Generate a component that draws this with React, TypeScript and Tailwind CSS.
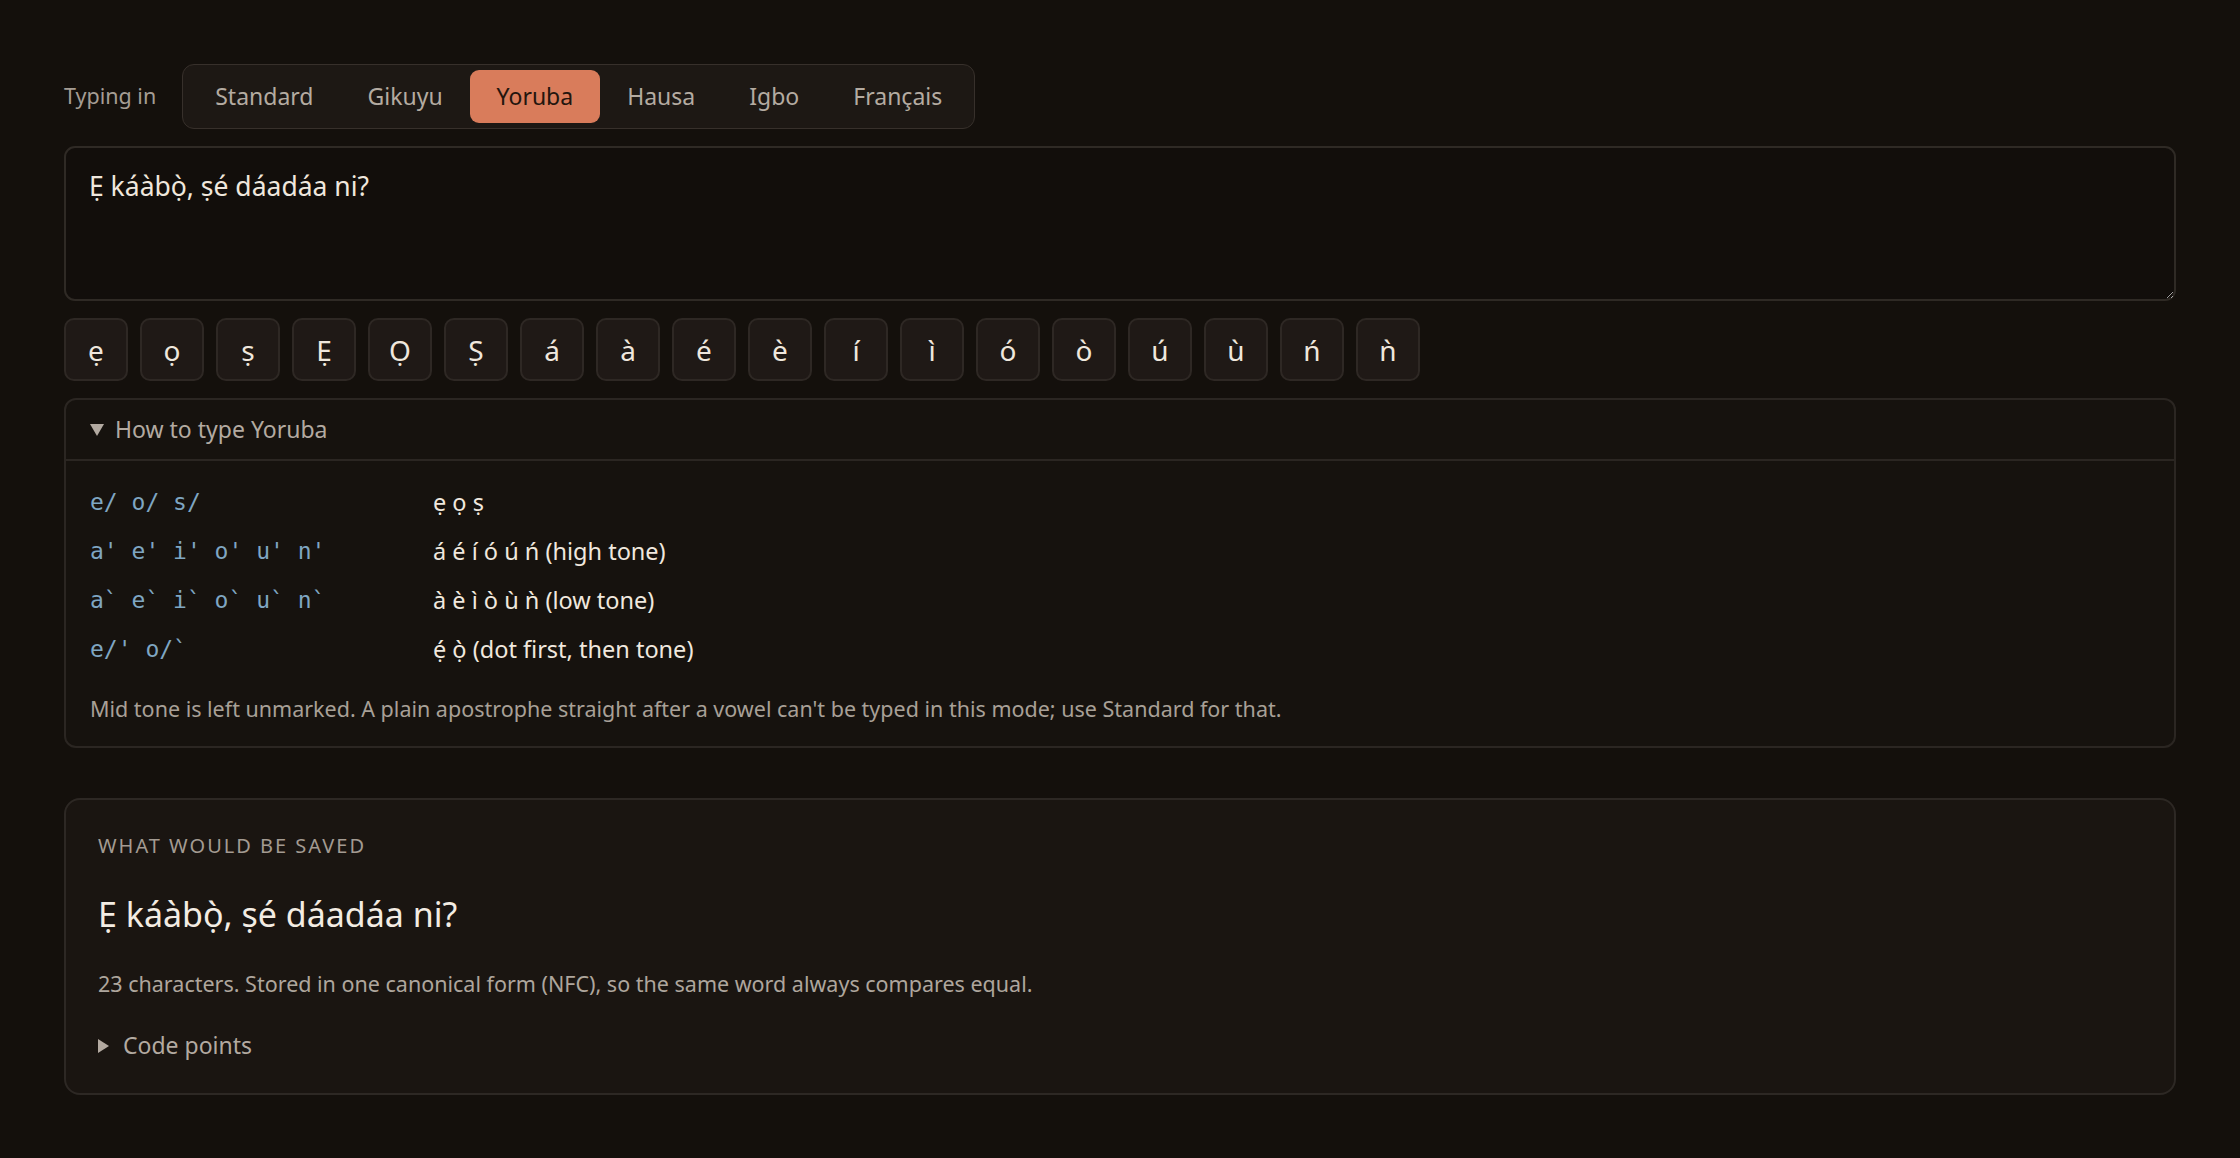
import React, { useState } from 'react'

const layouts = ['Standard', 'Gikuyu', 'Yoruba', 'Hausa', 'Igbo', 'Français']

const keys = ['ẹ', 'ọ', 'ṣ', 'Ẹ', 'Ọ', 'Ṣ', 'á', 'à', 'é', 'è', 'í', 'ì', 'ó', 'ò', 'ú', 'ù', 'ń', 'ǹ']

const hints: [string, string][] = [
  ['e/ o/ s/', 'ẹ ọ ṣ'],
  ["a' e' i' o' u' n'", 'á é í ó ú ń (high tone)'],
  ['a` e` i` o` u` n`', 'à è ì ò ù ǹ (low tone)'],
  ["e/' o/`", 'ẹ́ ọ̀ (dot first, then tone)'],
]

const DownTriangle = () => (
  <svg width="14" height="12" viewBox="0 0 14 12" className="shrink-0">
    <polygon points="0,0 14,0 7,12" fill="#b3aaa1" />
  </svg>
)

const RightTriangle = () => (
  <svg width="11" height="14" viewBox="0 0 11 14" className="shrink-0">
    <polygon points="0,0 11,7 0,14" fill="#b3aaa1" />
  </svg>
)

const App: React.FC = () => {
  const [layout, setLayout] = useState('Yoruba')
  const [text, setText] = useState('Ẹ káàbọ̀, ṣé dáadáa ni?')
  const saved = text.normalize('NFC')

  return (
    <div className="min-h-screen bg-[#14100c] font-['Noto_Sans',sans-serif] text-[#efe7dd] px-16 py-16">
      <div className="flex flex-col gap-[17px]">
        {/* layout picker */}
        <div className="flex items-center gap-[26px]">
          <span className="text-[21.5px] text-[#a59d94]">Typing in</span>
          <div className="flex rounded-[12px] border border-[#37302b] bg-[#1d1814] p-[5px]">
            {layouts.map((name) => (
              <button
                key={name}
                onClick={() => setLayout(name)}
                className={
                  name === layout
                    ? 'h-[53px] px-[27px] rounded-[9px] text-[23px] bg-[#d97c5b] text-[#23150e]'
                    : 'h-[53px] px-[27px] rounded-[9px] text-[23px] text-[#b4aba1]'
                }
              >
                {name}
              </button>
            ))}
          </div>
        </div>

        <textarea
          value={text}
          onChange={(e) => setText(e.target.value)}
          spellCheck={false}
          className="h-[155px] w-full rounded-[11px] border-2 border-[#2f2a25] bg-[#120e0b] px-[23px] py-[17px] text-[26.5px] leading-[42px] text-[#efe7dd] outline-none"
        />

        <div className="flex gap-[12px]">
          {keys.map((k) => (
            <button
              key={k}
              onClick={() => setText((prev) => prev + k)}
              className="flex h-[63px] w-[64px] items-center justify-center rounded-[10px] border-2 border-[#2e2824] bg-[#1f1916] text-[28px] text-[#efe7dd]"
            >
              {k}
            </button>
          ))}
        </div>

        <details open className="rounded-[12px] border-2 border-[#2b2622] bg-[#16120e]">
          <summary className="flex h-[61px] list-none items-center gap-[11px] border-b-2 border-[#2b2622] px-[24px] text-[23px] text-[#b3aaa1] [&::-webkit-details-marker]:hidden">
            <DownTriangle />
            How to type Yoruba
          </summary>
          <div className="px-[24px] pt-[24px] pb-[22px]">
            <div className="grid grid-cols-[343px_1fr] gap-y-[14px]">
              {hints.map(([keysTyped, result]) => (
                <React.Fragment key={keysTyped}>
                  <span className="font-['DejaVu_Sans_Mono',monospace] text-[23px] leading-[35px] text-[#7fa6c2] whitespace-pre">
                    {keysTyped}
                  </span>
                  <span className="text-[23.5px] leading-[35px] text-[#f0e8de]">{result}</span>
                </React.Fragment>
              ))}
            </div>
            <p className="mt-[27px] text-[21.5px] leading-[30px] text-[#a8a097]">
              Mid tone is left unmarked. A plain apostrophe straight after a vowel can't be typed in this
              mode; use Standard for that.
            </p>
          </div>
        </details>
      </div>

      <div className="mt-[50px] rounded-[16px] border-2 border-[#2d2824] bg-[#1a1511] px-[32px] pt-[31px] pb-[30px]">
        <div className="text-[20px] leading-[30px] tracking-[0.1em] text-[#a39b92]">WHAT WOULD BE SAVED</div>
        <div className="mt-[26px] text-[34px] leading-[54px] text-[#f3ece3]">{saved}</div>
        <p className="mt-[28px] text-[21.5px] leading-[30px] text-[#aea69d]">
          {Array.from(saved).length} characters. Stored in one canonical form (NFC), so the same word always
          compares equal.
        </p>
        <details className="mt-[29px]">
          <summary className="flex list-none items-center gap-[14px] text-[23px] leading-[35px] text-[#b3aaa1] [&::-webkit-details-marker]:hidden">
            <RightTriangle />
            Code points
          </summary>
        </details>
      </div>
    </div>
  )
}

export default App
